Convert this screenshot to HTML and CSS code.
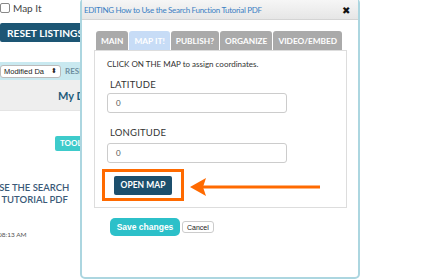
FILE: index.html
```
<!DOCTYPE html>
<html lang="en">
<head>
    <meta charset="UTF-8">
    <title>Edit Document</title>
    <link rel="stylesheet" href="styles.css">
</head>
<body>
    <div class="page">
        <label class="mapit"><span class="check"></span>Map It</label>
        <div class="reset-row"><button class="reset">RESET LISTINGS</button></div>
        <div class="sortbar">
            <span class="select">Modified Da<span class="arrows">&#x2B0D;</span></span>
            <span class="reset-link">RESET</span>
        </div>
        <div class="heading">My Documents</div>
        <div class="toolrow"><span class="tool">TOOLS</span></div>
        <div class="doc-title">HOW TO USE THE SEARCH<br>FUNCTION TUTORIAL PDF</div>
        <div class="doc-time">08:13 AM</div>
    </div>

    <!-- 編集ダイアログ -->
    <div class="modal">
        <div class="modal-title">
            <span>EDITING How to Use the Search Function Tutorial PDF</span>
            <span class="close">&#x2716;</span>
        </div>
        <div class="modal-body">
            <div class="tabs">
                <span class="tab">MAIN</span>
                <span class="tab active">MAP IT!</span>
                <span class="tab">PUBLISH?</span>
                <span class="tab">ORGANIZE</span>
                <span class="tab">VIDEO/EMBED</span>
            </div>
            <div class="panel">
                <p class="hint">CLICK ON THE MAP to assign coordinates.</p>
                <label class="field-label">LATITUDE</label>
                <div class="input">0</div>
                <label class="field-label second">LONGITUDE</label>
                <div class="input">0</div>
                <div class="highlight"><button class="open-map">OPEN MAP</button></div>
            </div>
            <div class="actions">
                <button class="save">Save changes</button>
                <button class="cancel">Cancel</button>
            </div>
        </div>
    </div>

    <!-- 注目用の矢印 -->
    <svg class="arrow" width="132" height="20" viewBox="0 0 132 20">
        <line x1="12" y1="10" x2="130" y2="10" stroke="#ff6a00" stroke-width="3"/>
        <polygon points="0,10 16,1 13,10 16,19" fill="#ff6a00"/>
    </svg>
</body>
</html>
```

FILE: styles.css
```
/* 背景ページ */
body {
    margin: 0;
    font-family: Lato, "Open Sans", sans-serif;
    background: #fff;
    color: #333;
    width: 438px;
    height: 280px;
    overflow: hidden;
    position: relative;
}

.page {
    width: 300px;
    overflow: hidden;
}

.mapit {
    display: flex;
    align-items: center;
    gap: 3px;
    font-size: 10px;
    line-height: 10px;
    color: #444;
    height: 10px;
    margin-top: 3px;
}

.check {
    width: 8px;
    height: 8px;
    border: 1px solid #888;
    border-radius: 2px;
    background: #fff;
}

.reset-row {
    margin-top: 10px;
    height: 19px;
}

.reset {
    background: #1d5674;
    color: #fff;
    border: none;
    font-family: Lato, sans-serif;
    font-weight: bold;
    font-size: 10.2px;
    padding: 0 7px;
    height: 19px;
    border-radius: 2px;
    white-space: nowrap;
    display: block;
}

.sortbar {
    margin-top: 20px;
    background: #c9e9f0;
    height: 18px;
    display: flex;
    align-items: center;
    gap: 4px;
}

.select {
    background: #fff;
    border: 1px solid #bbb;
    border-radius: 3px;
    font-size: 7.5px;
    font-family: "Liberation Sans", sans-serif;
    color: #222;
    display: flex;
    align-items: center;
    padding-left: 3px;
    box-sizing: border-box;
    width: 61px;
    height: 13px;
    white-space: nowrap;
}

.arrows {
    margin-left: auto;
    margin-right: 3px;
    font-size: 7px;
}

.reset-link {
    font-size: 8px;
    font-weight: bold;
    color: #6e8ea0;
}

.heading {
    background: #eeeeee;
    height: 30px;
    line-height: 31px;
    font-size: 11px;
    font-weight: bold;
    color: #1f5c7c;
    padding-left: 58px;
    white-space: nowrap;
    border-bottom: 1px solid #e4e4e4;
}

.toolrow {
    margin-top: 19px;
    padding-left: 55px;
    height: 15px;
}

.tool {
    display: inline-block;
    background: #3ecbcb;
    color: #fff;
    font-size: 8px;
    line-height: 9px;
    font-weight: bold;
    padding: 3px 5px;
    border-radius: 2px;
}

.doc-title {
    margin-top: 37px;
    margin-left: -50px;
    font-size: 9.5px;
    line-height: 12px;
    color: #3b5a78;
    font-weight: 600;
    white-space: nowrap;
}

.doc-time {
    margin-top: 25px;
    margin-left: -2px;
    font-size: 6.5px;
    line-height: 8px;
    color: #555;
}

/* 編集ダイアログ */
.modal {
    position: absolute;
    left: 80px;
    top: -2px;
    width: 276px;
    height: 277px;
    background: #fff;
    border: 2px solid #acd6e0;
    border-radius: 5px;
}

.modal-title {
    height: 19px;
    background: linear-gradient(#f6f6f6, #e6e6e6);
    border-bottom: 1px solid #d4d4d4;
    display: flex;
    align-items: center;
    justify-content: space-between;
    padding: 0 8px 0 2px;
    font-size: 8px;
    letter-spacing: -0.3px;
    color: #3a80c4;
}

.close {
    font-size: 10px;
    color: #111;
    letter-spacing: 0;
}

.modal-body {
    padding: 11px 11px 0 12px;
}

.tabs {
    display: flex;
    gap: 1px;
    padding-left: 2px;
    height: 19px;
}

.tab {
    flex-shrink: 0;
    white-space: nowrap;
    background: #aaaaaa;
    color: #fff;
    font-size: 8.3px;
    font-weight: bold;
    padding: 0 5px;
    line-height: 20px;
    border-radius: 3px 3px 0 0;
}

.tab.active {
    background: #c7dcf6;
}

.panel {
    border: 1px solid #dddddd;
    height: 156px;
    padding: 0 0 0 12px;
}

.hint {
    margin: 8px 0 0;
    font-size: 8px;
    line-height: 10px;
    color: #333;
}

.field-label {
    display: block;
    font-size: 9.5px;
    line-height: 12px;
    margin: 10px 0 2px 3px;
    color: #333;
    letter-spacing: 0.2px;
}

.field-label.second {
    margin-top: 14px;
    margin-bottom: 4px;
}

.input {
    width: 180px;
    height: 20px;
    border: 1px solid #cccccc;
    border-radius: 3px;
    box-sizing: border-box;
    font-size: 8px;
    line-height: 18px;
    padding-left: 8px;
    color: #555;
}

.highlight {
    margin: 6px 0 0 -5px;
    width: 76px;
    height: 26px;
    border: 3px solid #ff6a00;
    display: flex;
    align-items: center;
    justify-content: center;
}

.open-map {
    background: #1c4f6d;
    color: #fff;
    border: none;
    font-family: Lato, sans-serif;
    font-size: 8.5px;
    font-weight: bold;
    height: 19px;
    width: 58px;
    padding: 0;
    border-radius: 2px;
}

.actions {
    display: flex;
    align-items: center;
    gap: 2px;
    margin: 10px 0 0 16px;
}

.save {
    background: #2cc0c9;
    color: #fff;
    border: none;
    font-family: "Liberation Sans", Arial, sans-serif;
    font-weight: bold;
    font-size: 8.5px;
    width: 70px;
    height: 18px;
    border-radius: 5px;
    padding: 0;
}

.cancel {
    background: #fff;
    border: 1px solid #cccccc;
    border-radius: 3px;
    font-family: "Liberation Sans", Arial, sans-serif;
    font-size: 7px;
    color: #222;
    height: 12px;
    padding: 0 4px;
}

.arrow {
    position: absolute;
    left: 190px;
    top: 177px;
}
```
